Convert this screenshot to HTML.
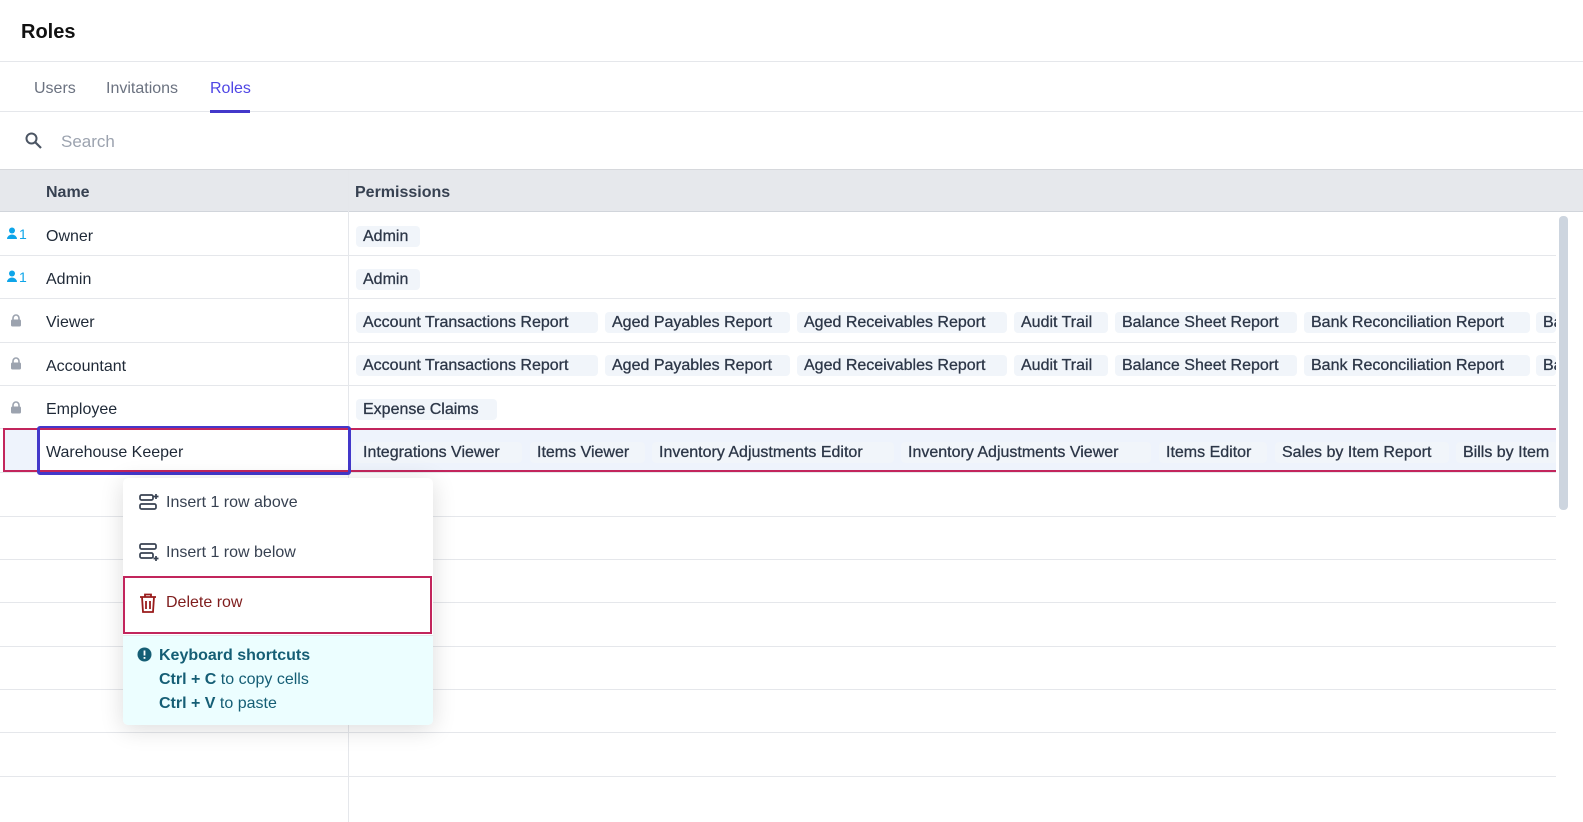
<!DOCTYPE html>
<html><head><meta charset="utf-8"><style>
*{box-sizing:border-box;margin:0;padding:0}
body{width:1583px;height:822px;overflow:hidden;background:#fff;font-family:"Liberation Sans",sans-serif;color:#1f2937;position:relative}
.a{position:absolute}
.hl{position:absolute;left:0;right:0;height:1px;background:#e5e7eb}
.tag{position:absolute;height:21px;background:#f1f5fa;border-radius:4px;font-size:16px;line-height:21px;padding-left:7px;color:#2d3748;white-space:nowrap;overflow:hidden;-webkit-text-stroke:0.3px #2d3748;margin-top:2px}
.nm{position:absolute;left:46px;font-size:16px;color:#1f2937;margin-top:3px}
</style></head><body>
<div class="a" style="left:21px;top:21px;font-size:20px;font-weight:bold;color:#111">Roles</div>
<div class="hl" style="top:61px"></div>
<div class="hl" style="top:111px"></div>
<div class="a" style="left:34px;top:80px;font-size:16px;color:#6b7280">Users</div>
<div class="a" style="left:106px;top:80px;font-size:16px;color:#6b7280">Invitations</div>
<div class="a" style="left:210px;top:80px;font-size:16px;color:#4f46e5">Roles</div>
<div class="a" style="left:210px;top:110px;width:40px;height:3px;background:#4338ca"></div>
<svg class="a" style="left:24px;top:131px" width="19" height="19" viewBox="0 0 19 19"><circle cx="7.5" cy="7.5" r="5" fill="none" stroke="#4b5563" stroke-width="2"/><path d="M11 11l6 6" stroke="#4b5563" stroke-width="2.2"/></svg>
<div class="a" style="left:61px;top:132px;font-size:17px;color:#9ca3af">Search</div>
<div class="a" style="left:0;top:169px;width:1583px;height:43px;background:#e6e8ec;border-top:1px solid #d6d8dc;border-bottom:1px solid #d1d5db"></div>
<div class="a" style="left:46px;top:184px;font-size:16px;font-weight:bold;color:#374151">Name</div>
<div class="a" style="left:355px;top:184px;font-size:16px;font-weight:bold;color:#374151">Permissions</div>
<div class="a" style="left:348px;top:170px;width:1px;height:652px;background:#e5e7eb"></div>
<div class="hl" style="top:255px"></div><div class="hl" style="top:298px"></div><div class="hl" style="top:342px"></div><div class="hl" style="top:385px"></div><div class="hl" style="top:428px"></div><div class="hl" style="top:472px"></div><div class="hl" style="top:516px"></div><div class="hl" style="top:559px"></div><div class="hl" style="top:602px"></div><div class="hl" style="top:646px"></div><div class="hl" style="top:689px"></div><div class="hl" style="top:732px"></div><div class="hl" style="top:776px"></div>
<svg class="a" style="left:7px;top:227px" width="22" height="14"><circle cx="5" cy="3.5" r="3" fill="#0ea5e9"/><path d="M0 12a5 4.5 0 0 1 10 0z" fill="#0ea5e9"/><text x="12" y="12" font-size="14" fill="#0ea5e9" font-family="Liberation Sans">1</text></svg>
<svg class="a" style="left:7px;top:270px" width="22" height="14"><circle cx="5" cy="3.5" r="3" fill="#0ea5e9"/><path d="M0 12a5 4.5 0 0 1 10 0z" fill="#0ea5e9"/><text x="12" y="12" font-size="14" fill="#0ea5e9" font-family="Liberation Sans">1</text></svg>
<svg class="a" style="left:10px;top:314px" width="12" height="13"><path d="M3 6V4a3 3 0 0 1 6 0v2" fill="none" stroke="#9ca3af" stroke-width="1.6"/><rect x="1" y="5.5" width="10" height="7" rx="1.5" fill="#9ca3af"/></svg>
<svg class="a" style="left:10px;top:357px" width="12" height="13"><path d="M3 6V4a3 3 0 0 1 6 0v2" fill="none" stroke="#9ca3af" stroke-width="1.6"/><rect x="1" y="5.5" width="10" height="7" rx="1.5" fill="#9ca3af"/></svg>
<svg class="a" style="left:10px;top:401px" width="12" height="13"><path d="M3 6V4a3 3 0 0 1 6 0v2" fill="none" stroke="#9ca3af" stroke-width="1.6"/><rect x="1" y="5.5" width="10" height="7" rx="1.5" fill="#9ca3af"/></svg>
<div class="nm" style="top:225px">Owner</div>
<div class="nm" style="top:268px">Admin</div>
<div class="nm" style="top:311px">Viewer</div>
<div class="nm" style="top:355px">Accountant</div>
<div class="nm" style="top:398px">Employee</div>
<div class="tag" style="left:356px;top:224px;width:64px">Admin</div>
<div class="tag" style="left:356px;top:267px;width:64px">Admin</div>
<div class="tag" style="left:356px;top:310px;width:242px">Account Transactions Report</div>
<div class="tag" style="left:605px;top:310px;width:185px">Aged Payables Report</div>
<div class="tag" style="left:797px;top:310px;width:210px">Aged Receivables Report</div>
<div class="tag" style="left:1014px;top:310px;width:94px">Audit Trail</div>
<div class="tag" style="left:1115px;top:310px;width:182px">Balance Sheet Report</div>
<div class="tag" style="left:1304px;top:310px;width:226px">Bank Reconciliation Report</div>
<div class="tag" style="left:1536px;top:310px;width:20px">Ba</div>
<div class="tag" style="left:356px;top:353px;width:242px">Account Transactions Report</div>
<div class="tag" style="left:605px;top:353px;width:185px">Aged Payables Report</div>
<div class="tag" style="left:797px;top:353px;width:210px">Aged Receivables Report</div>
<div class="tag" style="left:1014px;top:353px;width:94px">Audit Trail</div>
<div class="tag" style="left:1115px;top:353px;width:182px">Balance Sheet Report</div>
<div class="tag" style="left:1304px;top:353px;width:226px">Bank Reconciliation Report</div>
<div class="tag" style="left:1536px;top:353px;width:20px">Ba</div>
<div class="tag" style="left:356px;top:397px;width:141px">Expense Claims</div>
<div class="a" style="left:3px;top:428px;width:1558px;height:44px;background:#eef3fc;border:2px solid #c2255c"></div>
<div class="a" style="left:37px;top:426px;width:314px;height:49px;background:#fff;border:3px solid #4338ca;border-radius:3px"></div>
<div class="a" style="left:40px;top:428px;width:308px;height:44px;border-top:2px solid #c2255c;border-bottom:2px solid #c2255c"></div>
<div class="nm" style="top:441px">Warehouse Keeper</div>
<div class="tag" style="left:356px;top:440px;width:166px">Integrations Viewer</div>
<div class="tag" style="left:530px;top:440px;width:115px">Items Viewer</div>
<div class="tag" style="left:652px;top:440px;width:242px">Inventory Adjustments Editor</div>
<div class="tag" style="left:901px;top:440px;width:250px">Inventory Adjustments Viewer</div>
<div class="tag" style="left:1159px;top:440px;width:108px">Items Editor</div>
<div class="tag" style="left:1275px;top:440px;width:174px">Sales by Item Report</div>
<div class="tag" style="left:1456px;top:440px;width:102px">Bills by Item</div>
<div class="a" style="left:1556px;top:212px;width:27px;height:610px;background:#fff"></div>
<div class="a" style="left:1559px;top:216px;width:9px;height:294px;background:#cdd5df;border-radius:4px"></div>
<div class="a" style="left:123px;top:478px;width:310px;height:247px;background:#fff;border-radius:5px;box-shadow:0 4px 24px rgba(0,0,0,.14);overflow:hidden">
 <svg class="a" style="left:16px;top:15px" width="20" height="20" viewBox="0 0 20 20" fill="none" stroke="#374151" stroke-width="1.7"><rect x="1" y="2" width="13" height="5" rx="1.5"/><rect x="1" y="11" width="16" height="5" rx="1.5"/><path d="M17 1v5M14.5 3.5h5"/></svg>
 <div class="a" style="left:43px;top:16px;font-size:16px;color:#374151">Insert 1 row above</div>
 <svg class="a" style="left:16px;top:65px" width="20" height="20" viewBox="0 0 20 20" fill="none" stroke="#374151" stroke-width="1.7"><rect x="1" y="1" width="16" height="5" rx="1.5"/><rect x="1" y="10" width="13" height="5" rx="1.5"/><path d="M17 13v5M14.5 15.5h5"/></svg>
 <div class="a" style="left:43px;top:66px;font-size:16px;color:#374151">Insert 1 row below</div>
 <div class="a" style="left:0;top:98px;width:309px;height:58px;border:2px solid #c2255c"></div>
 <svg class="a" style="left:16px;top:115px" width="18" height="20" viewBox="0 0 18 20" fill="none" stroke="#991b1b" stroke-width="1.8"><path d="M1 4h16M6 4V1.5h6V4M3 4l1 15h10l1-15M7 8v8M11 8v8"/></svg>
 <div class="a" style="left:43px;top:116px;font-size:16px;color:#7f1d1d">Delete row</div>
 <div class="a" style="left:0;top:157px;width:310px;height:90px;background:#ecfeff;border-top:1px solid #e5e7eb"></div>
 <svg class="a" style="left:14px;top:169px" width="15" height="15"><circle cx="7.5" cy="7.5" r="7" fill="#155e75"/><rect x="6.6" y="3.5" width="1.8" height="5" fill="#fff"/><rect x="6.6" y="10" width="1.8" height="1.8" fill="#fff"/></svg>
 <div class="a" style="left:36px;top:166px;font-size:16px;line-height:24px;color:#155e75"><b>Keyboard shortcuts</b><br><b>Ctrl + C</b> to copy cells<br><b>Ctrl + V</b> to paste</div>
</div>
</body></html>
